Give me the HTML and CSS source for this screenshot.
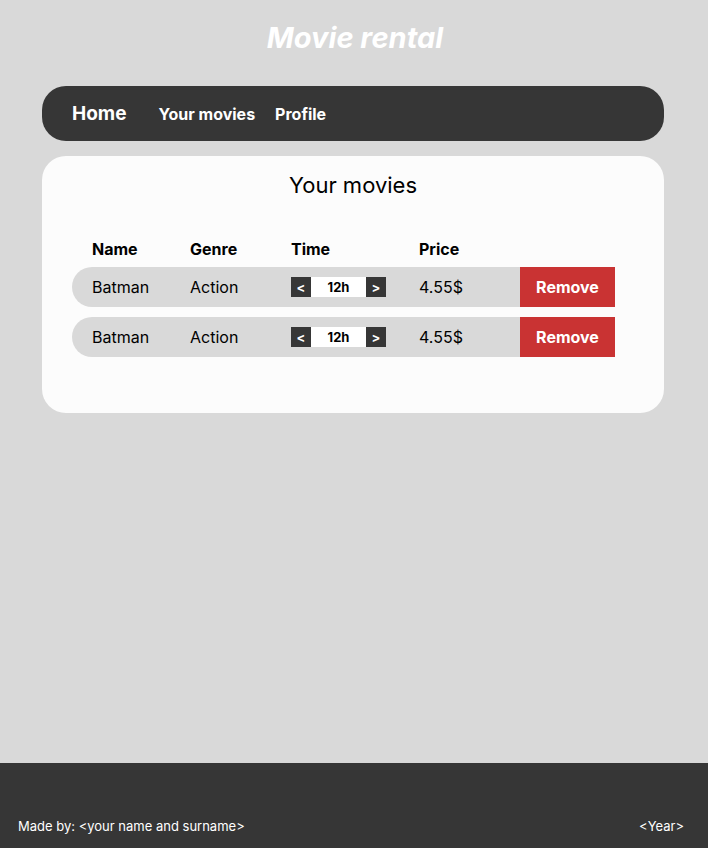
FILE: index.html
```html
<!DOCTYPE html>
<html lang="en">
<head>
<meta charset="utf-8">
<meta name="viewport" content="width=device-width, initial-scale=1">
<title>Movie rental</title>
<link rel="stylesheet" href="styles.css">
</head>
<body>
<header class="site-header">
  <h1 class="brand">Movie rental</h1>
  <nav class="nav">
    <a class="nav-home" href="#">Home</a>
    <a class="nav-link" href="#">Your movies</a>
    <a class="nav-link" href="#">Profile</a>
  </nav>
</header>
<main class="panel">
  <h2 class="panel-title">Your movies</h2>
  <table class="rentals">
    <colgroup><col class="col-name"><col class="col-genre"><col class="col-time"><col class="col-price"><col class="col-action"></colgroup>
    <thead>
      <tr><th scope="col">Name</th><th scope="col">Genre</th><th scope="col">Time</th><th scope="col">Price</th><td></td></tr>
    </thead>
    <tbody>
      <tr>
        <td>Batman</td><td>Action</td>
        <td><div class="stepper"><button class="step" type="button">&lt;</button><output class="hours">12h</output><button class="step" type="button">&gt;</button></div></td>
        <td>4.55$</td>
        <td class="action"><button class="remove" type="button">Remove</button></td>
      </tr>
      <tr>
        <td>Batman</td><td>Action</td>
        <td><div class="stepper"><button class="step" type="button">&lt;</button><output class="hours">12h</output><button class="step" type="button">&gt;</button></div></td>
        <td>4.55$</td>
        <td class="action"><button class="remove" type="button">Remove</button></td>
      </tr>
    </tbody>
  </table>
</main>
<footer class="footer">
  <span>Made by: &lt;your name and surname&gt;</span>
  <span>&lt;Year&gt;</span>
</footer>
</body>
</html>
```
FILE: styles.css
```css
* { box-sizing: border-box; }

body {
  margin: 0;
  min-height: 100vh;
  display: flex;
  flex-direction: column;
  background: #d9d9d9;
  color: #000;
  font-family: Inter, sans-serif;
  font-size: 16px;
  line-height: 20px;
}

button { border: 0; padding: 0; font: inherit; color: #fff; cursor: pointer; }

.site-header { padding: 20px 44px 0 42px; }

.brand {
  margin: 0 0 30px;
  padding-left: 4px;
  color: #fff;
  font-size: 29px;
  font-style: italic;
  font-weight: 700;
  line-height: 36px;
  text-align: center;
}

.nav {
  display: flex;
  align-items: baseline;
  gap: 20px;
  padding: 18px 30px 17px;
  border-radius: 24px;
  background: #363636;
}

.nav a { color: #fff; font-weight: 700; line-height: 20px; text-decoration: none; }
.nav .nav-home { margin-right: 12px; font-size: 19px; }

.panel {
  margin: 15px 44px 0 42px;
  padding: 15px 49px 56px 30px;
  border-radius: 24px;
  background: #fcfcfc;
}

.panel-title {
  margin: 0 0 32px;
  padding-left: 19px;
  font-size: 22px;
  font-weight: 400;
  line-height: 28px;
  text-align: center;
}

.rentals {
  width: 100%;
  margin-bottom: -10px;
  border-collapse: separate;
  border-spacing: 0 10px;
  table-layout: fixed;
}

.col-name { width: 118px; }
.col-genre { width: 101px; }
.col-time { width: 128px; }
.col-action { width: 95px; }

.rentals th, .rentals td { padding: 0; text-align: left; }
.rentals th:first-child, .rentals td:first-child { padding-left: 20px; }
.rentals th { height: 16px; line-height: 16px; }
.rentals tbody td { height: 40px; background: #d9d9d9; }
.rentals tbody td:first-child { border-radius: 20px 0 0 20px; }

.stepper {
  display: grid;
  grid-template-columns: 20px 55px 20px;
  width: 95px;
  height: 20px;
  font-size: 13px;
  font-weight: 700;
  text-align: center;
}

.step { background: #363636; }
.hours { background: #fff; }

.remove {
  display: block;
  width: 100%;
  height: 40px;
  background: #c93333;
  font-weight: 700;
}

.footer {
  display: flex;
  justify-content: space-between;
  align-items: flex-end;
  height: 85px;
  margin-top: auto;
  padding: 0 24px 12px 18px;
  background: #363636;
  color: #fff;
  font-size: 13px;
}
```
